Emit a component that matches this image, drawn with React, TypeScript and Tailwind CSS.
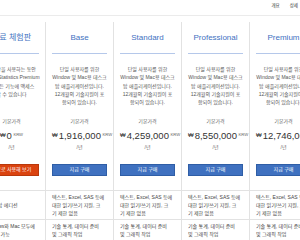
const font = { fontFamily: '"Liberation Sans", "Noto Sans CJK KR", sans-serif' }

type Plan = {
  name: string
  desc: string[]
  price: string
  trial?: boolean
  features: string[][]
}

const paidDesc = [
  "단일 사용자를 위한",
  "Window 및 Mac용 데스크",
  "탑 애플리케이션입니다.",
  "12개월의 기술지원이 포",
  "함되어 있습니다.",
]

const paidFeatures = [
  ["텍스트, Excel, SAS 등에", "대한 읽기/쓰기 지원, 크", "기 제한 없음"],
  ["기술 통계, 데이터 준비", "및 그래픽 작업"],
]

const plans: Plan[] = [
  {
    name: "무료 체험판",
    desc: ["체험판을 사용하는 동안", "SPSS Statistics Premium", "의 모든 기능에 액세스", "할 수 있습니다"],
    price: "0",
    trial: true,
    features: [["데스크탑 에디션"], ["Windows와 Mac 모두에", "서 사용 가능"]],
  },
  { name: "Base", desc: paidDesc, price: "1,916,000", features: paidFeatures },
  { name: "Standard", desc: paidDesc, price: "4,259,000", features: paidFeatures },
  { name: "Professional", desc: paidDesc, price: "8,550,000", features: paidFeatures },
  { name: "Premium", desc: paidDesc, price: "12,746,000", features: paidFeatures },
]

function Header({ plan }: { plan: Plan }) {
  return (
    <div className="flex flex-col items-center border-r border-[#e2e2e2] px-[6px] pt-[11px] pb-[14px] text-center">
      <h3 className="whitespace-nowrap text-[8px] leading-[10px] text-[#4171bf]">{plan.name}</h3>
      <div className="mt-[10px] h-px w-full bg-[#b5c8ea]" />
      <p className="mt-[11px] h-[53px] whitespace-nowrap text-[5px] leading-[8.3px] text-[#555]">
        {plan.desc.map((line, i) => (
          <span key={i} className="block">
            {line}
          </span>
        ))}
      </p>
      <div className="text-[5px] leading-[7px] text-[#666]">기본가격</div>
      <div className="mt-[3px] w-full whitespace-nowrap text-center leading-[12px] text-[#333]">
        <span className="align-[2px] text-[6px]">₩</span>
        <span className="ml-[1px] text-[9.5px]">{plan.price}</span>
        <span className="ml-[1.5px] align-[3px] text-[4.2px] text-[#666]">KRW</span>
      </div>
      <div className="mt-[2px] text-[5px] leading-[7px] text-[#666]">/년</div>
      {plan.trial ? (
        <button className="mt-[13px] flex h-[12px] w-full items-center justify-center whitespace-nowrap border border-[#b9380b] bg-[#da430f] text-[5px] text-white">
          무료로 사용해 보기
        </button>
      ) : (
        <button className="mt-[13px] flex h-[12px] w-full items-center justify-center whitespace-nowrap border border-[#2f5ea6] bg-[#3f71c0] text-[5px] text-white">
          지금 구매
        </button>
      )}
    </div>
  )
}

export default function App() {
  return (
    <div className="h-[240px] w-[300px] overflow-hidden bg-white" style={font}>
      <div className="flex h-[16px] items-center justify-end gap-[10px] border-b border-[#ebebeb] pr-[2px] pb-[3px] text-[4.5px] text-[#333]">
        <span>개요</span>
        <span>상세</span>
      </div>
      <div className="-ml-[22px] mt-[6px] grid grid-cols-[repeat(5,68px)]">
        {plans.map((plan) => (
          <Header key={plan.name} plan={plan} />
        ))}
        {[0, 1].map((row) =>
          plans.map((plan) => (
            <div
              key={plan.name + row}
              className="flex items-center whitespace-nowrap border-r border-t border-[#e2e2e2] px-[6px] py-[2px] text-[5px] leading-[8px] text-[#444]"
            >
              <div>
                {plan.features[row].map((line, i) => (
                  <span key={i} className="block">
                    {line}
                  </span>
                ))}
              </div>
            </div>
          ))
        )}
      </div>
    </div>
  )
}
